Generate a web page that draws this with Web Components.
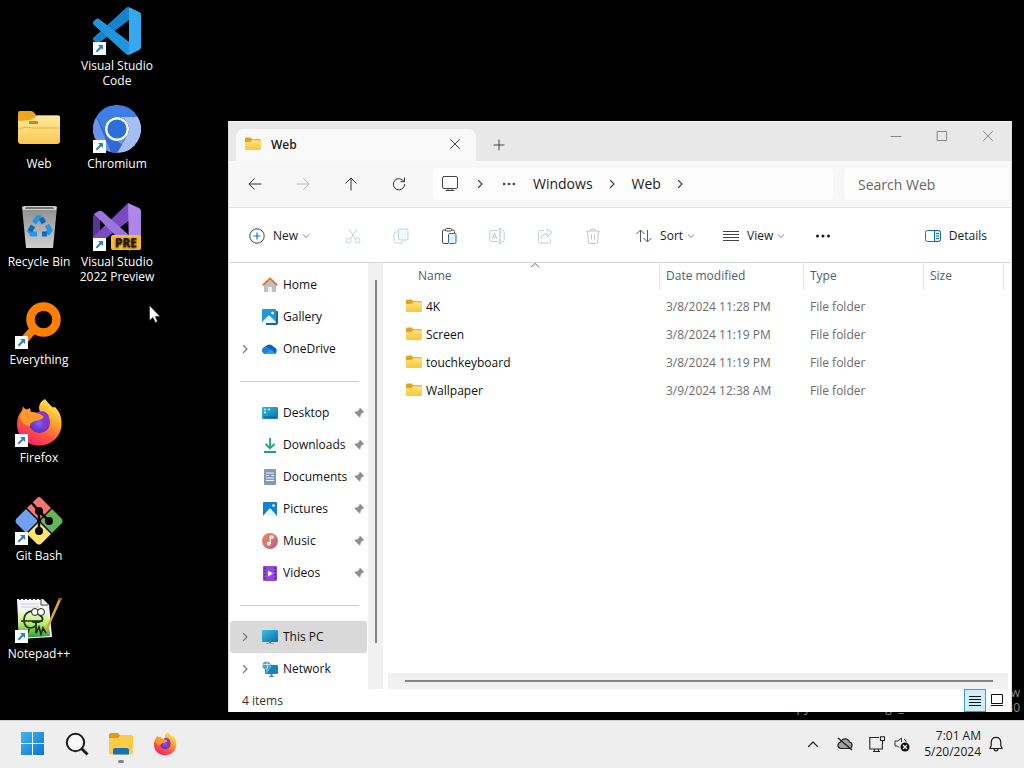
<!DOCTYPE html>
<html lang="en">
<head>
<meta charset="utf-8">
<title>Web - File Explorer</title>
<meta name="viewport" content="width=device-width, initial-scale=1">
<style>
html, body { margin: 0; height: 100%; background: #000; }
body { font: 12px/16px "Open Sans", "Noto Sans", sans-serif; color: #1b1b1b; }
</style>
</head>
<body>
<desktop-shell></desktop-shell>
<script>
const stroke = 'fill="none" stroke="currentColor" stroke-linecap="round" stroke-linejoin="round"';

const folderArt = `<svg viewBox="0 0 16 16"><defs><linearGradient id="f" x1="0" y1="0" x2="0" y2="1"><stop offset="0" stop-color="#ffe27a"/><stop offset="1" stop-color="#f8c63c"/></linearGradient></defs>
<path d="M0 2q0-1.500 1.200-1.500h4.300l1.800 1.700h7.500q1.200 0 1.200 1.200v3H0z" fill="#e3a21a"/><path d="M0 5h5.200l2-1.700h7.600q1.200 0 1.200 1.200v7.300q0 1.200-1.200 1.200H1.200Q0 13 0 11.800z" fill="url(#f)"/></svg>`;

const firefoxArt = `<svg viewBox="0 0 48 48"><defs><linearGradient id="a" x1=".8" y1=".05" x2=".25" y2=".95"><stop offset="0" stop-color="#fff04a"/><stop offset=".35" stop-color="#ffa42c"/><stop offset=".7" stop-color="#ff5040"/><stop offset="1" stop-color="#f0246e"/></linearGradient><radialGradient id="b"><stop offset="0" stop-color="#8a5cf5"/><stop offset="1" stop-color="#5a2fc0"/></radialGradient></defs>
<path d="M30 0c3 4 5 6 8 8.500l2-.5c5 5 7 11 6.500 18C46 38 36 46.500 24 46.500S2 38 2 25c0-6 2-10 5-13.500l1-4 3 3.500L15 9l1 4 9 1-1-5c0-4 2-7 6-9z" fill="url(#a)"/>
<circle cx="24.500" cy="23.500" r="10.500" fill="url(#b)"/><path d="M21 14c6-4 12-1 13 4 2 5-1 11-5 14 1-9-4-12-8-13z" fill="#8635d2"/>
<path d="M7 12c3-3 6-2 9 1 3 1 6 1 9 2l4 3c-2 3-6 3-9 4-3 1-5 2-5 5-5 0-9-4-10-8 0-3 1-5 2-7z" fill="#ff9a2a"/></svg>`;

const pcArt = `<svg viewBox="0 0 16 16"><defs><linearGradient id="p" x1="0" y1="0" x2="1" y2="1"><stop offset="0" stop-color="#32c2e4"/><stop offset="1" stop-color="#0f6da8"/></linearGradient></defs><rect x="0" y="1" width="16" height="12" rx="1.200" fill="url(#p)"/><path d="M7 13h2v1.500H7z" fill="#687b88"/><path d="M4 14h8v1H4z" fill="#9aabb6"/></svg>`;

const picture = `<path d="M1 15l6-7q1-1 2 0l6 7z" fill="#e9f6ff"/><circle cx="11.500" cy="4.500" r="1.300" fill="#fff"/>`;

const art = {
  folder: folderArt,
  firefox: firefoxArt,
  vscode: `<svg viewBox="0 0 24 24"><path fill="#1683cb" d="M23.150 2.587L18.210.210a1.494 1.494 0 0 0-1.705.290l-9.460 8.630-4.120-3.128a.999.999 0 0 0-1.276.057L.327 7.261A1 1 0 0 0 .326 8.740L3.899 12 .326 15.260a1 1 0 0 0 .001 1.479L1.650 17.940a.999.999 0 0 0 1.276.057l4.120-3.128 9.460 8.630a1.492 1.492 0 0 0 1.704.290l4.942-2.377A1.500 1.500 0 0 0 24 20.060V3.939a1.500 1.500 0 0 0-.850-1.352zm-5.146 14.861L10.826 12l7.178-5.448v10.896z"/><path fill="#35a9ee" d="M18 .1l5.150 2.487A1.500 1.500 0 0 1 24 3.940v16.120a1.500 1.500 0 0 1-.850 1.350L18 23.900z"/><path d="M.3 7.300L1.700 6q.6-.4 1.200 0L18 17.500v6.300q-.8.200-1.500-.4L.3 8.700Q0 8 .3 7.300z" fill="#2195dc"/></svg>`,
  webfolder: `<svg viewBox="0 0 48 48"><defs><linearGradient id="w" x1="0" y1="0" x2="0" y2="1"><stop offset="0" stop-color="#ffe9a0"/><stop offset="1" stop-color="#fbc94d"/></linearGradient></defs><path d="M3 8q0-2 2-2h11q2 0 3 1.500l2.500 3H43q2 0 2 2V22H3z" fill="#eda51c"/><path d="M3 16l13-1 6-4.500h21q2 0 2 2V36q0 3-3 3H6q-3 0-3-3z" fill="url(#w)"/><path d="M14 16h9v3h-9z" fill="#c88b20"/><path d="M3 24q8-3 15-1h27" stroke="#e5b54e" fill="none"/></svg>`,
  chromium: `<svg viewBox="0 0 48 48"><path d="M24 12h20.800A24 24 0 0 0 3.200 12l10.400 18A12 12 0 0 1 24 12z" fill="#3f7ee4"/><path d="M3.200 12A24 24 0 0 0 24 48l10.400-18a12 12 0 0 1-20.800 0z" fill="#6598ea"/><path d="M44.800 12A24 24 0 0 1 24 48l10.400-18A12 12 0 0 0 24 12z" fill="#a5bff5"/><path d="M3.200 12l10.400 18 10.400 6 5 3.400L24 48q-3 0-6-.8z" fill="#3468d2"/><circle cx="24" cy="24" r="12" fill="#f4f8ff"/><circle cx="24" cy="24" r="9.600" fill="#2b70da"/></svg>`,
  bin: `<svg viewBox="0 0 48 48"><defs><linearGradient id="r" x1="0" y1="0" x2="0" y2="1"><stop offset="0" stop-color="#8c8c8c"/><stop offset="1" stop-color="#cfcfcf"/></linearGradient></defs><path d="M7 4l3-1h29l3 1-4 41H11z" fill="url(#r)"/><path d="M7 4l3-1h29l3 1-1 3H8z" fill="#d0d0d0"/><path d="M10 6h29l-1-2H11z" fill="#727272"/><g fill="none" stroke="#2794e6" stroke-width="5"><path d="M19 20l3.500-5h4"/><path d="M32 22l3 5-3 4"/><path d="M22 31h-5l-2-3 3-5"/></g><g fill="none" stroke="#1268b8" stroke-width="5"><path d="M26 15l3 5"/><path d="M32 31h-5"/><path d="M15 28l3-5"/></g></svg>`,
  vs: `<svg viewBox="0 0 48 48"><path d="M0 13l3-4 4-1v31l-6-3q-1-1-1-3z" fill="#5a3596"/><path d="M0 34L35 0l3 16L8 39q-2 1-4 0l-3-2q-1-1-1-3z" fill="#7a4bc0"/><path d="M1 11l5-3q2-1 4 1l28 25v12q-2 0-3-1z" fill="#9b74dc"/><path d="M35 0l11 5q2 1 2 3v32l-12 8z" fill="#ae86e8"/><rect x="18" y="32" width="30" height="15" rx="2" fill="#fdb92b"/><text x="33" y="44" text-anchor="middle" font-family="Open Sans, sans-serif" font-size="12" font-weight="700" fill="#241a06">PRE</text></svg>`,
  everything: `<svg viewBox="0 0 48 48"><circle cx="28.500" cy="18.500" r="13" fill="none" stroke="#ff8000" stroke-width="8.500"/><path d="M19 28l-9 10" stroke="#ff8000" stroke-width="8"/></svg>`,
  git: `<svg viewBox="0 0 48 48"><path d="M24 0q1 0 2 1l10 10-11 11h-2L12 11 22 1q1-1 2-1z" fill="#f27474"/><path d="M11 12l11 11v2L11 36 1 26q-1-2 0-4z" fill="#6fa1f2"/><path d="M37 12l10 10q1 2 0 4L37 36 26 25v-2z" fill="#62b558"/><path d="M23 26h2l11 11-10 10q-2 1-4 0L12 37z" fill="#ffe36d"/><path d="M16 5l8 9M24 12v24M24 14l10 10" stroke="#000" stroke-width="2.500" fill="none"/><g fill="#000"><circle cx="24" cy="14" r="4"/><circle cx="34" cy="24" r="4"/><circle cx="24" cy="34" r="4"/></g></svg>`,
  notepad: `<svg viewBox="0 0 48 48"><defs><linearGradient id="n" x1="0" y1="0" x2="0" y2="1"><stop offset="0" stop-color="#f2f8ee"/><stop offset=".45" stop-color="#c9ee6e"/><stop offset="1" stop-color="#1f9f36"/></linearGradient></defs><path d="M2 4h26l6 6 3 32-33 2z" fill="#f6f6f6"/><path d="M3 15h30l2 26-31 2z" fill="url(#n)"/><path d="M4 4h22" stroke="#222" stroke-width="2" stroke-dasharray="2 2"/><path d="M26 4v6h7" fill="none" stroke="#444"/><path d="M6 9h18M6 12h18" stroke="#c8d0d8"/><path d="M9 25c0-8 8-11 13-7l5 4c2 4-2 6-8 5M9 25c0 8 6 9 10 7s2-6-2-5M14 34l-1 4M6 26h22M21 31v7l3-6 2 7 2-6 3 5" fill="none" stroke="#19301a" stroke-width="1.700"/><g fill="#fff" stroke="#222"><circle cx="20" cy="17" r="3.500"/><circle cx="26" cy="17" r="3.500"/></g><path d="M47 3L33 34l-2 3v-4L44 3z" fill="#d9a82b"/><path d="M44 3h3l-1 3-3-1z" fill="#a4552b"/></svg>`,
  home: `<svg viewBox="0 0 16 16"><path d="M2 7l6-5 6 5v7.500q0 .5-.5.500H10v-5H6v5H2.500Q2 15 2 14.500z" fill="#bcc1c6"/><path d="M6 10h4v5H6z" fill="#f0f1f2"/><path d="M.8 8.200L8 1.500l7.200 6.700" fill="none" stroke="#e67a35" stroke-width="2" stroke-linejoin="round"/></svg>`,
  gallery: `<svg viewBox="0 0 16 16"><path d="M4 2h11q1 0 1 1v11q0 2-2 2H4z" fill="#1b629c"/><rect x="0" y="0" width="14" height="14" rx="1" fill="#2197dc"/><path d="M0 13l6-6q1-1 2 0l6 6q0 1-1 1H1q-1 0-1-1z" fill="#e9f6ff"/><circle cx="10.500" cy="4" r="1.300" fill="#fff"/></svg>`,
  onedrive: `<svg viewBox="0 0 16 16"><path d="M3.500 13A3.500 3.500 0 0 1 3 6.100 5 5 0 0 1 11.800 6 3.700 3.700 0 0 1 12.500 13z" fill="#0a63bd"/><path d="M3 6.100a4 4 0 0 1 3.500.7L14 12.700q-.7.300-1.500.300h-9A3.500 3.500 0 0 1 3 6.100z" fill="#1c83dc"/><path d="M2 12.700l7-4.200 5 4.200q-.7.300-1.500.300h-9z" fill="#2a9df0"/></svg>`,
  desktop: `<svg viewBox="0 0 16 16"><defs><linearGradient id="d" x1="0" y1="0" x2="1" y2="1"><stop offset="0" stop-color="#2cbfdc"/><stop offset="1" stop-color="#0f6fb4"/></linearGradient></defs><rect x="0" y="2" width="16" height="12" rx="1.200" fill="url(#d)"/><path d="M2 4.500h2M2 7.500h2M6 4.500h2" stroke="#e8fbff" stroke-width="1.500"/><path d="M2 12h12" stroke="#175b94"/></svg>`,
  downloads: `<svg viewBox="0 0 16 16"><path d="M8 1v10M3.500 7L8 11.300 12.500 7M2 15h12" fill="none" stroke="#1aa678" stroke-width="1.800"/></svg>`,
  documents: `<svg viewBox="0 0 16 16"><rect x="2" y="0" width="12" height="16" rx="1" fill="#8498b8"/><path d="M4 4h8M4 6.500h3M4 9h8M4 11.500h8M9 6.500h3" stroke="#eef4fa" stroke-width="1.200"/></svg>`,
  pictures: `<svg viewBox="0 0 16 16"><rect x="1" y="1" width="14" height="14" rx="1" fill="#1282cd"/>${picture}</svg>`,
  music: `<svg viewBox="0 0 16 16"><defs><linearGradient id="m" x1="0" y1="0" x2="1" y2="1"><stop offset="0" stop-color="#ee8a5a"/><stop offset="1" stop-color="#bf5a80"/></linearGradient></defs><circle cx="8" cy="8" r="8" fill="url(#m)"/><circle cx="6.700" cy="10.700" r="2" fill="#fff"/><path d="M8.200 10.700V3.200h2.800v2H8.200" fill="none" stroke="#fff" stroke-width="1.200"/></svg>`,
  videos: `<svg viewBox="0 0 16 16"><rect x="1" y="1" width="14" height="15" rx="1" fill="#9147dc"/><path d="M2.700 2.500v12M13.300 2.500v12" stroke="#4d1e96" stroke-width="1.500" stroke-dasharray="1.500 1.800"/><path d="M6 5.500l5 3-5 3z" fill="#fff"/></svg>`,
  pc: pcArt,
  network: `<svg viewBox="0 0 16 16"><rect x="3" y="4" width="13" height="9" rx="1" fill="#1585bd"/><path d="M4 5h6l-5 7H4z" fill="#43c1e6"/><circle cx="4.500" cy="4.500" r="4" fill="#5f9fc4"/><path d="M1 3.500h7M4.500.5q3 4 0 8" stroke="#cdebf7" fill="none" stroke-width=".9"/><path d="M8.500 13h2v2H12v1H7v-1h1.500z" fill="#6c7f8c"/></svg>`,
  pin: `<svg viewBox="0 0 12 12"><path d="M7 .8L11.200 5l-1 .7-1 .1-1.500 1.700-.2 2.200-.8.800-2.600-2.600L1 11l3.100-3.100L1.500 5.300l.8-.8 2.200-.2L6.200 2.800l.1-1z" fill="#8a8d91"/></svg>`,
  chevron: `<svg viewBox="0 0 12 12"><path d="M4.500 2.500L8 6 4.500 9.500" ${stroke} stroke-width="1.200"/></svg>`,
  down: `<svg viewBox="0 0 12 12"><path d="M3.200 4.800L6 7.500l2.800-2.700" ${stroke} stroke-width="1"/></svg>`,
  up: `<svg viewBox="0 0 12 12"><path d="M1.500 8.500L6 4l4.500 4.500" ${stroke} stroke-width="1.200"/></svg>`,
  close: `<svg viewBox="0 0 12 12"><path d="M1.500 1.500l9 9M10.500 1.500l-9 9" ${stroke}/></svg>`,
  plus: `<svg viewBox="0 0 12 12"><path d="M6 1v10M1 6h10" ${stroke}/></svg>`,
  minimize: `<svg viewBox="0 0 12 12"><path d="M1 6.500h10" ${stroke}/></svg>`,
  maximize: `<svg viewBox="0 0 12 12"><rect x="1.500" y="1.500" width="9" height="9" ${stroke}/></svg>`,
  back: `<svg viewBox="0 0 16 16"><path d="M14 8H2.200M7.300 2.700L2 8l5.300 5.300" ${stroke}/></svg>`,
  forward: `<svg viewBox="0 0 16 16"><path d="M2 8h11.800M8.700 2.700L14 8l-5.300 5.300" ${stroke}/></svg>`,
  upward: `<svg viewBox="0 0 16 16"><path d="M8 14V2.200M2.700 7.300L8 2l5.300 5.300" ${stroke}/></svg>`,
  refresh: `<svg viewBox="0 0 16 16"><path d="M13 5.500A5.700 5.700 0 1 0 13.700 8.500M13.500 2v3.700h-3.700" ${stroke}/></svg>`,
  monitor: `<svg viewBox="0 0 16 16"><path d="M2 .5h12q1.500 0 1.500 1.500v9q0 1.500-1.500 1.500H2Q.5 12.500.5 11V2Q.5.500 2 .5zM4 14.500h8M6 12.500v2M10 12.500v2" ${stroke}/></svg>`,
  dots: `<svg viewBox="0 0 16 16"><g fill="currentColor"><circle cx="2.500" cy="8" r="1.500"/><circle cx="8" cy="8" r="1.500"/><circle cx="13.500" cy="8" r="1.500"/></g></svg>`,
  add: `<svg viewBox="0 0 16 16"><circle cx="8" cy="8" r="7.200" fill="none" stroke="#3d4a55"/><path d="M8 4.500v7M4.500 8h7" stroke="#1377c4" stroke-width="1.200"/></svg>`,
  cut: `<svg viewBox="0 0 16 16"><path d="M4 1l6.500 10M12 1L5.500 11" fill="none" stroke="#cbcfd3"/><g fill="none" stroke="#bcd4e6"><circle cx="3.500" cy="12.500" r="2.500"/><circle cx="12.500" cy="12.500" r="2.500"/></g></svg>`,
  copy: `<svg viewBox="0 0 16 16"><path d="M5.500 4H3Q1 4 1 6v7q0 2 2 2h5q2 0 2-2" fill="none" stroke="#cbcfd3"/><rect x="5.500" y="1" width="9.500" height="11" rx="1.500" fill="#f4f9fd" stroke="#b6d3ea"/></svg>`,
  paste: `<svg viewBox="0 0 16 16"><path d="M7 15.500H3Q1.500 15.500 1.500 14V3Q1.500 2 3 2h9q1.500 0 1.500 1.500V5" fill="none" stroke="#4a4a4a"/><rect x="4.500" y=".5" width="6" height="2.500" rx="1" fill="#fff" stroke="#4a4a4a"/><rect x="7.500" y="5.500" width="7.500" height="10" rx="1.200" fill="#e6f3fc" stroke="#1b6fae"/></svg>`,
  rename: `<svg viewBox="0 0 16 16"><path d="M9 13.500H2.500Q.8 13.500.8 12V4q0-1.500 1.700-1.500H9M13 2.500q2.200 0 2.200 1.500v8q0 1.500-2.200 1.500" fill="none" stroke="#b9cfe2"/><path d="M11 .8v14.400M9.500.8h3M9.500 15.200h3" stroke="#9cc3e2"/><path d="M3 11l2.500-6L8 11M4 9h3" fill="none" stroke="#b9c8d5"/></svg>`,
  share: `<svg viewBox="0 0 16 16"><path d="M7 2.500H3Q1.500 2.500 1.500 4v9.500q0 1.500 1.500 1.500h9q1.500 0 1.500-1.500V11" fill="none" stroke="#c6d0d8"/><path d="M4.500 11q0-5 5.500-5.500V8.500L15 4.500 10 1v2.500" fill="none" stroke="#a7d0ee"/></svg>`,
  trash: `<svg viewBox="0 0 16 16"><path d="M1 3h14M5.500 3q0-2.200 2.500-2.200T10.500 3M2.500 3l1 11q0 1.500 1.500 1.500h6q1.500 0 1.500-1.500l1-11M6.500 6.500v5M9.500 6.500v5" fill="none" stroke="#c3c6c9"/></svg>`,
  sort: `<svg viewBox="0 0 16 16"><path d="M4.500 14V2M.5 6l4-4 4 4" fill="none" stroke="#555"/><path d="M11.500 2v12M7.500 10l4 4 4-4" fill="none" stroke="#1b6fae"/></svg>`,
  view: `<svg viewBox="0 0 16 16"><path d="M0 3.500h16M0 6.500h16M0 9.500h16M0 12.500h16" stroke="#444"/></svg>`,
  details: `<svg viewBox="0 0 16 16"><rect x=".5" y="2.500" width="15" height="11" rx="2" fill="#fff" stroke="#1b6f9e"/><path d="M9.500 2.500H13.500q2 0 2 2v7q0 2-2 2h-4z" fill="#d4edfa" stroke="#1b6f9e"/><path d="M11 5.500h3M11 8h3M11 10.500h3" stroke="#1b6f9e"/></svg>`,
  listview: `<svg viewBox="0 0 16 16"><path d="M2 3.500h12M2 6.500h12M2 9.500h12M2 12.500h12" stroke="#111"/></svg>`,
  tileview: `<svg viewBox="0 0 16 16"><path d="M2.500 1.500h11v9h-11zM2 12.500h12" fill="none" stroke="#111"/></svg>`,
  start: `<svg viewBox="0 0 24 24"><defs><linearGradient id="s" x1="0" y1="0" x2="24" y2="24" gradientUnits="userSpaceOnUse"><stop offset="0" stop-color="#42b7ec"/><stop offset="1" stop-color="#0b6fd4"/></linearGradient></defs><path d="M0 0h11v11H0zM12 0h11v11H12zM0 12h11v11H0zM12 12h11v11H12z" fill="url(#s)"/></svg>`,
  search: `<svg viewBox="0 0 24 24"><circle cx="10.500" cy="10.500" r="8.700" fill="#f8f8f8" stroke="#1c1c1c" stroke-width="2"/><path d="M16.500 16.500l6 6" stroke="#1c1c1c" stroke-width="2.800"/></svg>`,
  explorer: `<svg viewBox="0 0 24 24"><path d="M0 3q0-2 2-2h7l2.500 3H22q2 0 2 2v5H0z" fill="#dd9c13"/><path d="M0 6h9l2.500-3H22q2 0 2 2v15.500q0 2-2 2H2q-2 0-2-2z" fill="#fccb48"/><path d="M4 22.500V18q0-2 2-2h12q2 0 2 2v4.500z" fill="#1672b8"/></svg>`,
  cloudoff: `<svg viewBox="0 0 16 16"><path d="M4 12.500a3.300 3.300 0 0 1-.4-6.500 4.700 4.700 0 0 1 8.900 0 3.300 3.300 0 0 1-.5 6.500z" fill="#a2a2a2" stroke="#222" stroke-width="1.200"/><path d="M1 2l14 12" stroke="#222" stroke-width="1.400"/></svg>`,
  ethernet: `<svg viewBox="0 0 16 16"><path d="M10 1.500H.8v11.500h12.500V8M4 15.500h7M5.500 13v2.500M9.500 13v2.500M11.500.8h4v3.700h-4zM13.500 4.500V8" fill="none" stroke="#222" stroke-width="1.100"/></svg>`,
  muted: `<svg viewBox="0 0 16 16"><path d="M7.500 2L4 5H1v5h2.500L5 11.500M7.500 2v4M10 3q2 1 2.300 3" fill="none" stroke="#333"/><circle cx="11" cy="11" r="4.500" fill="#111"/><path d="M9 9l4 4M13 9l-4 4" stroke="#fff" stroke-width="1.100"/></svg>`,
  bell: `<svg viewBox="0 0 16 16"><path d="M1.800 12.500l1.400-2.700V6.300Q3.500 1.300 8 1.300t4.800 5v3.500l1.400 2.700zM6 12.800q.3 2 2 2t2-2" ${stroke} stroke-width="1.200"/></svg>`,
  shortcut: `<svg viewBox="0 0 13 13"><rect width="13" height="13" fill="#fff"/><path d="M5 3h5v5L8.300 6.300 4 10.500 2.700 9.200 6.800 4.800z" fill="#2b80bd"/></svg>`,
  pointer: `<svg viewBox="0 0 12 18"><path d="M.5.5v15l3.500-3 2.300 5 2.200-1-2.200-5h4.700z" fill="#fff" stroke="#222" stroke-width=".6"/></svg>`
};

function define(name, css, markup, setup) {
  const template = document.createElement('template');
  template.innerHTML = `<style>*{box-sizing:border-box}${css}</style>${markup}`;
  customElements.define(name, class extends HTMLElement {
    connectedCallback() {
      if (this.shadowRoot) return;
      this.attachShadow({ mode: 'open' }).append(template.content.cloneNode(true));
      if (setup) setup(this, this.shadowRoot);
    }
  });
}

const reset = `button{font:inherit;color:inherit;background:none;border:0;padding:0;margin:0;cursor:default;display:flex;align-items:center}a{color:inherit;text-decoration:none}`;

define('ui-icon', `
  :host { display: block; flex: none; width: var(--size, 16px); height: var(--size, 16px); }
  span, svg { display: block; width: 100%; height: 100%; }`, '<span></span>',
  (host, root) => { root.querySelector('span').innerHTML = art[host.getAttribute('name')]; });

define('desktop-icon', `${reset}
  :host { display: block; min-width: 0; }
  button { flex-direction: column; width: 100%; padding-top: 7px; gap: 3px; color: #fff; line-height: 15px; text-align: center; text-shadow: 0 1px 2px #000; }
  .art { position: relative; --size: 48px; }
  .badge { position: absolute; left: 0; bottom: 0; --size: 13px; }`,
  `<button type="button"><span class="art"></span><span><slot></slot></span></button>`,
  (host, root) => {
    root.querySelector('.art').innerHTML = `<ui-icon name="${host.getAttribute('icon')}"></ui-icon>` +
      (host.hasAttribute('shortcut') ? '<ui-icon class="badge" name="shortcut"></ui-icon>' : '');
  });

define('title-bar', `${reset}
  :host { display: flex; height: 40px; background: #e8e8e8; border-top: 1px solid #f6f6f6; }
  .tab { display: flex; align-items: center; gap: 10px; width: 240px; margin: 7px 0 0 7px; padding: 0 15px 0 9px; background: #f9f9f9; border-radius: 8px 8px 0 0; font-weight: 600; }
  .tab span { flex: 1; }
  .tab button { --size: 12px; padding-bottom: 2px; color: #444; }
  .new { --size: 12px; padding: 7px 17px 0; color: #444; }
  .caption { display: flex; margin-left: auto; padding-bottom: 12px; color: #888; }
  .caption button { width: 46px; justify-content: center; --size: 12px; }`,
  `<div class="tab"><ui-icon name="folder"></ui-icon><span>Web</span><button type="button" aria-label="Close tab"><ui-icon name="close"></ui-icon></button></div>
   <button class="new" type="button" aria-label="New tab"><ui-icon name="plus"></ui-icon></button>
   <div class="caption"><button type="button" aria-label="Minimize"><ui-icon name="minimize"></ui-icon></button><button type="button" aria-label="Maximize"><ui-icon name="maximize"></ui-icon></button><button type="button" aria-label="Close"><ui-icon name="close"></ui-icon></button></div>`);

define('address-bar', `${reset}
  :host { display: flex; align-items: center; height: 47px; background: #f7f7f7; border-bottom: 1px solid #e3e3e3; font-size: 14px; line-height: 20px; }
  .move { display: flex; width: 204px; flex: none; padding-left: 2px; --size: 16px; color: #333; }
  .move button { width: 48px; height: 32px; justify-content: center; }
  .move button:disabled { color: #bbb; }
  nav { display: flex; align-items: center; flex: 1; height: 32px; margin-right: 11px; padding-left: 9px; background: #fdfdfd; border-radius: 4px; }
  nav ui-icon { --size: 16px; color: #444; }
  .sep { width: 39px; display: flex; justify-content: center; }
  .sep ui-icon { --size: 12px; }
  .first { width: 44px; }
  .more ui-icon { --size: 14px; }
  .after { width: 17px; }
  input { flex: none; width: 165px; height: 32px; margin-right: 2px; padding: 0 14px; border: 0; border-radius: 4px; background: #fdfdfd; font: inherit; }
  input::placeholder { color: #666; opacity: 1; }`,
  `<div class="move"><button type="button" aria-label="Back"><ui-icon name="back"></ui-icon></button><button type="button" aria-label="Forward" disabled><ui-icon name="forward"></ui-icon></button><button type="button" aria-label="Up"><ui-icon name="upward"></ui-icon></button><button type="button" aria-label="Refresh"><ui-icon name="refresh"></ui-icon></button></div>
   <nav aria-label="Path"><button type="button" aria-label="This PC"><ui-icon name="monitor"></ui-icon></button><span class="sep first"><ui-icon name="chevron"></ui-icon></span><button class="more" type="button" aria-label="More folders"><ui-icon name="dots"></ui-icon></button><span class="after"></span><button type="button">Windows</button><span class="sep"><ui-icon name="chevron"></ui-icon></span><button type="button">Web</button><span class="sep"><ui-icon name="chevron"></ui-icon></span></nav>
   <input type="search" aria-label="Search Web" placeholder="Search Web">`);

define('command-bar', `${reset}
  :host { display: flex; align-items: center; height: 55px; padding: 1px 24px 0 20px; background: #fff; border-bottom: 1px solid #d6d6d6; }
  .label { gap: 8px; }
  .down { --size: 12px; margin-left: -6px; color: #888; }
  .set { display: flex; margin: 0 19px 0 17px; }
  .set button { width: 48px; height: 32px; justify-content: center; --size: 16px; }
  .view { margin: 0 28px 0 26px; }
  .details { margin-left: auto; }`,
  `<button class="label" type="button"><ui-icon name="add"></ui-icon><span>New</span><ui-icon class="down" name="down"></ui-icon></button>
   <div class="set"><button type="button" aria-label="Cut" disabled><ui-icon name="cut"></ui-icon></button><button type="button" aria-label="Copy" disabled><ui-icon name="copy"></ui-icon></button><button type="button" aria-label="Paste"><ui-icon name="paste"></ui-icon></button><button type="button" aria-label="Rename" disabled><ui-icon name="rename"></ui-icon></button><button type="button" aria-label="Share" disabled><ui-icon name="share"></ui-icon></button><button type="button" aria-label="Delete" disabled><ui-icon name="trash"></ui-icon></button></div>
   <button class="label" type="button"><ui-icon name="sort"></ui-icon><span>Sort</span><ui-icon class="down" name="down"></ui-icon></button>
   <button class="label view" type="button"><ui-icon name="view"></ui-icon><span>View</span><ui-icon class="down" name="down"></ui-icon></button>
   <button type="button" aria-label="See more"><ui-icon name="dots"></ui-icon></button>
   <button class="label details" type="button"><ui-icon name="details"></ui-icon><span>Details</span></button>`);

define('nav-item', `${reset}
  :host { display: block; }
  a { display: flex; align-items: center; height: 32px; padding-left: 9px; border-radius: 3px; color: #111; }
  :host([selected]) a { background: #d9d9d9; }
  .toggle { width: 23px; color: #777; --size: 12px; }
  .text { flex: 1; margin-left: 5px; white-space: nowrap; }
  .pin { --size: 12px; margin-right: 2px; }`,
  `<a href="#"><span class="toggle"></span><span class="art"></span><span class="text"><slot></slot></span></a>`,
  (host, root) => {
    root.querySelector('.art').innerHTML = `<ui-icon name="${host.getAttribute('icon')}"></ui-icon>`;
    if (host.hasAttribute('expandable')) root.querySelector('.toggle').innerHTML = '<ui-icon name="chevron"></ui-icon>';
    if (host.hasAttribute('pinned')) root.querySelector('a').insertAdjacentHTML('beforeend', '<ui-icon class="pin" name="pin"></ui-icon>');
  });

define('nav-pane', `
  :host { display: flex; flex: none; width: 154px; }
  nav { flex: 1; padding: 6px 1px 0 1px; }
  hr { margin: 16px 8px 15px 10px; border: 0; height: 1px; background: #c9c9c9; }
  .track { width: 15px; padding: 17px 0 46px 7px; background: #f1f1f1; }
  .thumb { width: 2px; height: 100%; background: #858585; }`,
  `<nav aria-label="Navigation pane">
    <nav-item icon="home">Home</nav-item><nav-item icon="gallery">Gallery</nav-item><nav-item icon="onedrive" expandable>OneDrive</nav-item>
    <hr>
    <nav-item icon="desktop" pinned>Desktop</nav-item><nav-item icon="downloads" pinned>Downloads</nav-item><nav-item icon="documents" pinned>Documents</nav-item><nav-item icon="pictures" pinned>Pictures</nav-item><nav-item icon="music" pinned>Music</nav-item><nav-item icon="videos" pinned>Videos</nav-item>
    <hr>
    <nav-item icon="pc" expandable selected>This PC</nav-item><nav-item icon="network" expandable>Network</nav-item>
   </nav><div class="track" aria-hidden="true"><div class="thumb"></div></div>`);

const files = [
  ['4K', '3/8/2024 11:28 PM'],
  ['Screen', '3/8/2024 11:19 PM'],
  ['touchkeyboard', '3/8/2024 11:19 PM'],
  ['Wallpaper', '3/9/2024 12:38 AM']
];

define('file-list', `
  :host { display: flex; flex-direction: column; justify-content: space-between; flex: 1; min-width: 0; }
  table { width: 599px; margin-left: 22px; table-layout: fixed; border-collapse: separate; border-spacing: 0; }
  .name { width: 255px; } .date { width: 144px; } .type { width: 120px; }
  th { position: relative; height: 27px; padding: 0 0 1px 6px; border-right: 1px solid #e5e5e5; color: #4c5f75; font-weight: 400; text-align: left; }
  th.name { padding-left: 13px; }
  .caret { position: absolute; top: -3px; left: calc(50% - 2px); --size: 10px; color: #666; }
  td { height: 28px; padding: 0 0 0 6px; color: #6d6d6d; white-space: nowrap; }
  tbody::before { content: ""; display: block; height: 3px; }
  td:first-child { padding-left: 1px; color: #111; }
  .file { display: flex; align-items: center; gap: 4px; }
  .track { height: 16px; margin: 0 3px 0 5px; padding: 7px 15px 0 17px; background: #f1f1f1; }
  .thumb { height: 2px; background: #858585; }`,
  `<table><thead><tr><th class="name" aria-sort="ascending">Name<ui-icon class="caret" name="up"></ui-icon></th><th class="date">Date modified</th><th class="type">Type</th><th>Size</th></tr></thead><tbody></tbody></table>
   <div class="track" aria-hidden="true"><div class="thumb"></div></div>`,
  (host, root) => {
    root.querySelector('tbody').innerHTML = files.map(([name, date]) =>
      `<tr><td><span class="file"><ui-icon name="folder"></ui-icon>${name}</span></td><td>${date}</td><td>File folder</td><td></td></tr>`).join('');
  });

define('status-bar', `${reset}
  :host { display: flex; align-items: center; height: 23px; padding: 0 3px 0 13px; color: #333; }
  button { width: 22px; height: 23px; justify-content: center; border: 1px solid transparent; }
  button:first-of-type { margin-left: auto; background: #cdeef9; border-color: #3c9fc8; }`,
  `<span>4 items</span><button type="button" aria-label="Details view" aria-pressed="true"><ui-icon name="listview"></ui-icon></button><button type="button" aria-label="Large icons view"><ui-icon name="tileview"></ui-icon></button>`);

define('explorer-window', `
  :host { display: flex; flex-direction: column; background: #fff; border-left: 1px solid #ddd; border-right: 1px solid #ddd; }
  .content { display: flex; flex: 1; min-height: 0; }`,
  `<title-bar></title-bar><address-bar></address-bar><command-bar></command-bar><div class="content"><nav-pane></nav-pane><file-list></file-list></div><status-bar></status-bar>`);

define('task-bar', `${reset}
  :host { display: flex; align-items: center; height: 48px; box-sizing: border-box; padding: 0 20px 1px 11px; background: #eee; border-top: 1px solid #cfcfcf; }
  .apps { display: flex; --size: 24px; }
  .apps button { position: relative; width: 44px; height: 46px; justify-content: center; }
  .running::after { content: ""; position: absolute; left: 19px; bottom: 4px; width: 6px; height: 3px; border-radius: 2px; background: #858585; }
  .tray { display: flex; align-items: center; margin-left: auto; }
  .hidden-icons { --size: 12px; margin-right: 18px; }
  .cloud { margin-right: 16px; }
  .net { margin-right: 9px; }
  .sound { margin-right: 14px; }
  .clock { text-align: right; display: block; margin-right: 7px; }
  .clock span { display: block; }`,
  `<div class="apps"><button type="button" aria-label="Start"><ui-icon name="start"></ui-icon></button><button type="button" aria-label="Search"><ui-icon name="search"></ui-icon></button><button class="running" type="button" aria-label="File Explorer"><ui-icon name="explorer"></ui-icon></button><button type="button" aria-label="Firefox"><ui-icon name="firefox"></ui-icon></button></div>
   <div class="tray"><button class="hidden-icons" type="button" aria-label="Show hidden icons"><ui-icon name="up"></ui-icon></button><button class="cloud" type="button" aria-label="OneDrive"><ui-icon name="cloudoff"></ui-icon></button><button class="net" type="button" aria-label="Network"><ui-icon name="ethernet"></ui-icon></button><button class="sound" type="button" aria-label="Volume muted"><ui-icon name="muted"></ui-icon></button><button class="clock" type="button"><span>7:01 AM</span><span>5/20/2024</span></button><button type="button" aria-label="Notifications"><ui-icon name="bell"></ui-icon></button></div>`);

define('desktop-shell', `
  :host { display: flex; flex-direction: column; min-height: 100vh; background: #000; }
  main { position: relative; flex: 1; }
  .icons { display: grid; grid-template-columns: 78px 78px; grid-auto-rows: 98px; }
  .icons > * { grid-column: 1; }
  .icons > .second { grid-column: 2; }
  .watermark { position: absolute; right: 4px; bottom: 5px; margin: 0; color: #8c8c8c; text-align: right; line-height: 15px; }
  explorer-window { position: absolute; top: 121px; right: 12px; bottom: 8px; left: 228px; }
  .pointer { position: absolute; left: 149px; top: 305px; width: 12px; height: 18px; }`,
  `<main>
    <div class="icons">
      <desktop-icon class="second" icon="vscode" shortcut>Visual Studio Code</desktop-icon>
      <desktop-icon icon="webfolder">Web</desktop-icon>
      <desktop-icon class="second" icon="chromium" shortcut>Chromium</desktop-icon>
      <desktop-icon icon="bin">Recycle Bin</desktop-icon>
      <desktop-icon class="second" icon="vs" shortcut>Visual Studio<br>2022 Preview</desktop-icon>
      <desktop-icon icon="everything" shortcut>Everything</desktop-icon>
      <desktop-icon icon="firefox" shortcut>Firefox</desktop-icon>
      <desktop-icon icon="git" shortcut>Git Bash</desktop-icon>
      <desktop-icon icon="notepad" shortcut>Notepad++</desktop-icon>
    </div>
    <p class="watermark">Windows 11 Pro Insider Preview<br>Evaluation copy. Build 26100.ge_release.240331-1430</p>
    <explorer-window></explorer-window>
    <ui-icon class="pointer" name="pointer"></ui-icon>
   </main>
   <task-bar></task-bar>`);
</script>
</body>
</html>
